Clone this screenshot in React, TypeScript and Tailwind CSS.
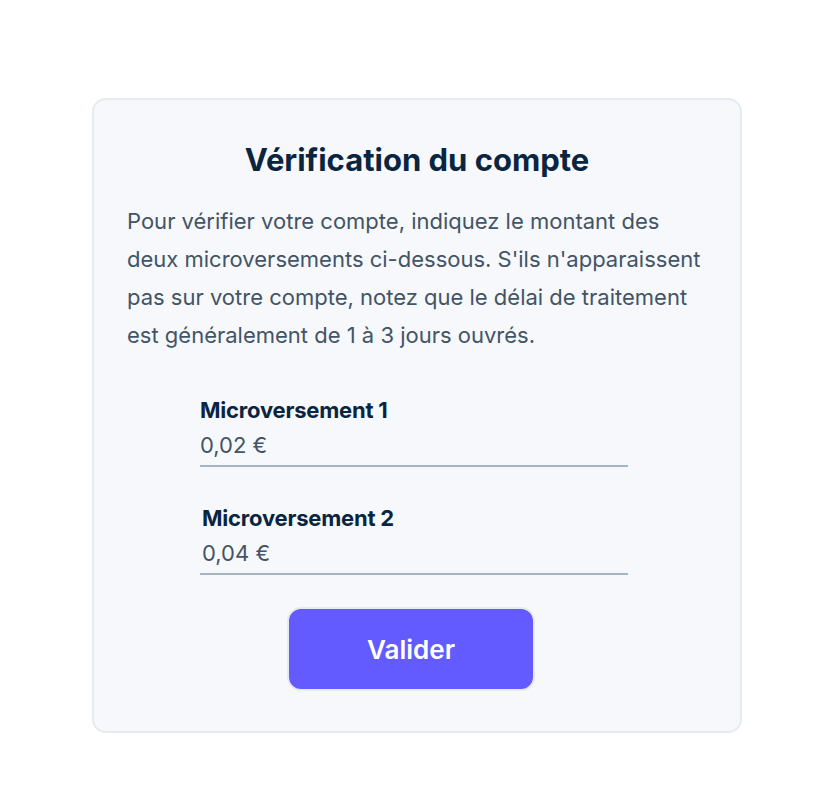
const FIELDS = [
  { label: "Microversement 1", value: "0,02 €", shift: "" },
  { label: "Microversement 2", value: "0,04 €", shift: "pl-[2px]" },
];

export default function App() {
  return (
    <div className="min-h-screen bg-white pt-[98px] pl-[92px]" style={{ fontFamily: "Inter, 'Noto Sans', sans-serif" }}>
      <div className="w-[650px] rounded-[14px] border-2 border-[#e6ebf1] bg-[#f6f8fb] px-[33px] pt-[38px] pb-[40px]">
        <h1 className="text-center text-[31px] font-bold leading-[44px] text-[#0a2540]">
          Vérification du compte
        </h1>
        <p className="mt-[20px] w-[580px] text-[22px] leading-[38px] text-[#425466]">
          Pour vérifier votre compte, indiquez le montant des deux microversements ci-dessous. S'ils n'apparaissent pas sur votre compte, notez que le délai de traitement est généralement de 1 à 3 jours ouvrés.
        </p>

        <div className="mt-[42px] ml-[73px] flex w-[428px] flex-col gap-[37px]">
          {FIELDS.map((f) => (
            <div key={f.label} className="flex flex-col">
              <label className={`text-[22px] font-bold leading-[28px] tracking-[-0.2px] text-[#0a2540] ${f.shift}`}>{f.label}</label>
              <div className={`mt-[7px] pb-[6px] border-b-2 border-[#a6b5c6] text-[22px] leading-[28px] text-[#425466] ${f.shift}`}>
                {f.value}
              </div>
            </div>
          ))}
        </div>

        <div className="mt-[32px] flex justify-center pr-[12px]">
          <button className="h-[84px] w-[248px] rounded-[14px] border-2 border-[#e6ebf1] bg-[#635bff] text-[26px] font-semibold text-white">
            Valider
          </button>
        </div>
      </div>
    </div>
  );
}
